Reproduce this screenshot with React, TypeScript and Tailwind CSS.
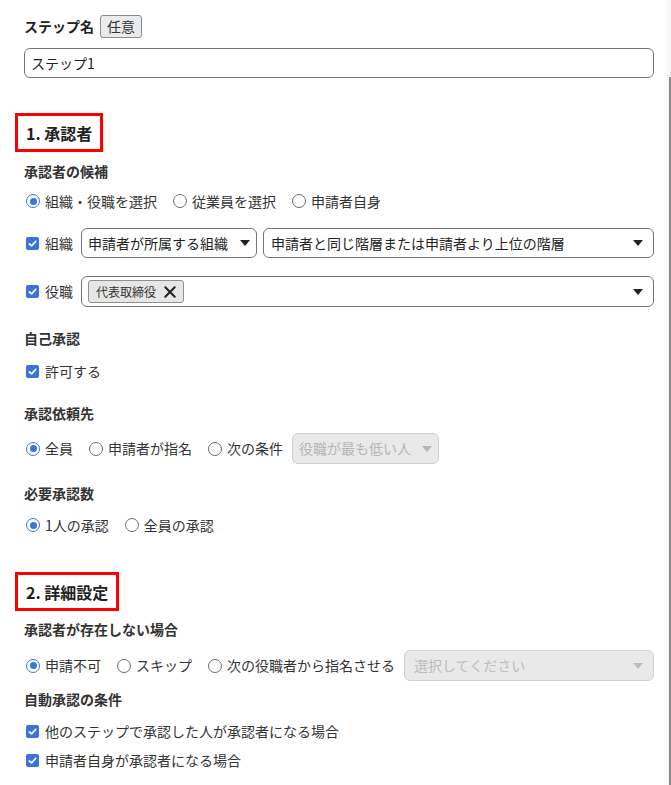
import React from "react";

const Radio = ({ checked }: { checked?: boolean }) => (
  <span
    className={
      "inline-flex items-center justify-center w-[14px] h-[14px] rounded-full border-[1.5px] shrink-0 " +
      (checked ? "border-[#3b74d8]" : "border-[#6b6b6b]")
    }
  >
    {checked && <span className="w-[7px] h-[7px] rounded-full bg-[#3b74d8]" />}
  </span>
);

const Check = () => (
  <span className="inline-flex items-center justify-center w-[13px] h-[13px] rounded-[2px] bg-[#3b74d8] shrink-0">
    <svg width="11" height="11" viewBox="0 0 12 12">
      <path d="M2.5 6.3 L5 8.6 L9.6 3.6" fill="none" stroke="#fff" strokeWidth="1.8" strokeLinecap="round" strokeLinejoin="round" />
    </svg>
  </span>
);

const Caret = ({ color = "#222" }: { color?: string }) => (
  <svg width="10" height="6" viewBox="0 0 10 6" className="shrink-0">
    <path d="M0 0 L10 0 L5 6 Z" fill={color} />
  </svg>
);

const RadioItem = ({ checked, label }: { checked?: boolean; label: string }) => (
  <label className="flex items-center gap-[5px]">
    <Radio checked={checked} />
    <span>{label}</span>
  </label>
);

const CheckItem = ({ label }: { label: string }) => (
  <label className="flex items-center gap-[6px] pl-[2px]">
    <Check />
    <span>{label}</span>
  </label>
);

const Heading = ({ children }: { children: React.ReactNode }) => (
  <div className="-ml-[9px] w-fit h-[39px] flex items-center px-2 border-[3px] border-[#ff0000] text-[16px] font-bold text-[#222]">
    {children}
  </div>
);

const Label = ({ children, className = "" }: { children: React.ReactNode; className?: string }) => (
  <div className={"h-5 flex items-center font-bold text-[14px] text-[#333] " + className}>{children}</div>
);

export default function App() {
  return (
    <div
      className="flex w-[671px] min-h-[785px] bg-white text-[14px] text-[#333]"
      style={{ fontFamily: '"Noto Sans CJK JP", "Noto Sans", sans-serif' }}
    >
      <div className="w-[667px] pl-6 pr-[13px] pt-[15px] flex flex-col">
        <div className="flex items-center gap-[6px] h-[23px]">
          <span className="font-bold text-[#222]">ステップ名</span>
          <span className="h-[23px] px-[6px] flex items-center bg-[#ebebeb] border border-[#8a8a8a] rounded-[3px] text-[#333]">
            任意
          </span>
        </div>
        <div className="mt-[10px] h-[30px] border border-[#767676] rounded-[6px] flex items-center px-[6px] text-[#222]">
          ステップ1
        </div>

        <div className="mt-[35px]">
          <Heading>1. 承認者</Heading>
        </div>
        <Label className="mt-[9px]">承認者の候補</Label>
        <div className="mt-[10px] h-5 flex items-center gap-4 pl-[2px]">
          <RadioItem checked label="組織・役職を選択" />
          <RadioItem label="従業員を選択" />
          <RadioItem label="申請者自身" />
        </div>

        <div className="mt-[17px] flex items-center h-[30px]">
          <div className="w-[57px]">
            <CheckItem label="組織" />
          </div>
          <div className="w-[176px] h-[30px] border border-[#767676] rounded-[6px] flex items-center justify-between px-[6px] text-[#222]">
            <span>申請者が所属する組織</span>
            <Caret />
          </div>
          <div className="ml-[6px] flex-1 h-[30px] border border-[#767676] rounded-[6px] flex items-center justify-between pl-[7px] pr-[10px] text-[#222]">
            <span>申請者と同じ階層または申請者より上位の階層</span>
            <Caret />
          </div>
        </div>

        <div className="mt-[18px] flex items-center h-[31px]">
          <div className="w-[57px]">
            <CheckItem label="役職" />
          </div>
          <div className="flex-1 h-[31px] border border-[#767676] rounded-[6px] flex items-center justify-between pl-[6px] pr-[10px]">
            <span className="h-[23px] flex items-center gap-[8px] px-[7px] bg-[#e6e6e6] border border-[#8f8f8f] rounded-[3px] text-[12px] text-[#333]">
              代表取締役
              <svg width="12" height="12" viewBox="0 0 12 12">
                <path d="M1.3 1.3 L10.7 10.7 M10.7 1.3 L1.3 10.7" stroke="#222" strokeWidth="2" strokeLinecap="round" />
              </svg>
            </span>
            <Caret />
          </div>
        </div>

        <Label className="mt-[21px]">自己承認</Label>
        <div className="mt-[13px] h-5 flex items-center">
          <CheckItem label="許可する" />
        </div>

        <Label className="mt-[22px]">承認依頼先</Label>
        <div className="mt-[10px] h-[31px] flex items-center gap-4 pl-[2px]">
          <RadioItem checked label="全員" />
          <RadioItem label="申請者が指名" />
          <div className="flex items-center">
            <RadioItem label="次の条件" />
            <div className="ml-[9px] w-[147px] h-[31px] bg-[#e9e9e9] border border-[#d0d0d0] rounded-[6px] flex items-center justify-between px-[6px] text-[#b5b5b5]">
              <span>役職が最も低い人</span>
              <Caret color="#b5b5b5" />
            </div>
          </div>
        </div>

        <Label className="mt-[19px]">必要承認数</Label>
        <div className="mt-[12px] h-5 flex items-center gap-4 pl-[2px]">
          <RadioItem checked label="1人の承認" />
          <RadioItem label="全員の承認" />
        </div>

        <div className="mt-[37px]">
          <Heading>2. 詳細設定</Heading>
        </div>
        <Label className="mt-[8px]">承認者が存在しない場合</Label>
        <div className="mt-[11px] h-[31px] flex items-center gap-4 pl-[2px]">
          <RadioItem checked label="申請不可" />
          <RadioItem label="スキップ" />
          <div className="flex-1 flex items-center">
            <RadioItem label="次の役職者から指名させる" />
            <div className="ml-[9px] flex-1 h-[31px] bg-[#e9e9e9] border border-[#d0d0d0] rounded-[6px] flex items-center justify-between pl-[9px] pr-[10px] text-[#bdbdbd]">
              <span>選択してください</span>
              <Caret color="#bdbdbd" />
            </div>
          </div>
        </div>
        <Label className="mt-[8px]">自動承認の条件</Label>
        <div className="mt-[12px] h-5 flex items-center">
          <CheckItem label="他のステップで承認した人が承認者になる場合" />
        </div>
        <div className="mt-[9px] h-5 flex items-center">
          <CheckItem label="申請者自身が承認者になる場合" />
        </div>
      </div>
      <div className="w-[4px] bg-[#f7f7f7] flex flex-col items-end pt-[77px]">
        <div className="w-[2px] flex-1 bg-[#8a8a8a]" />
      </div>
    </div>
  );
}
